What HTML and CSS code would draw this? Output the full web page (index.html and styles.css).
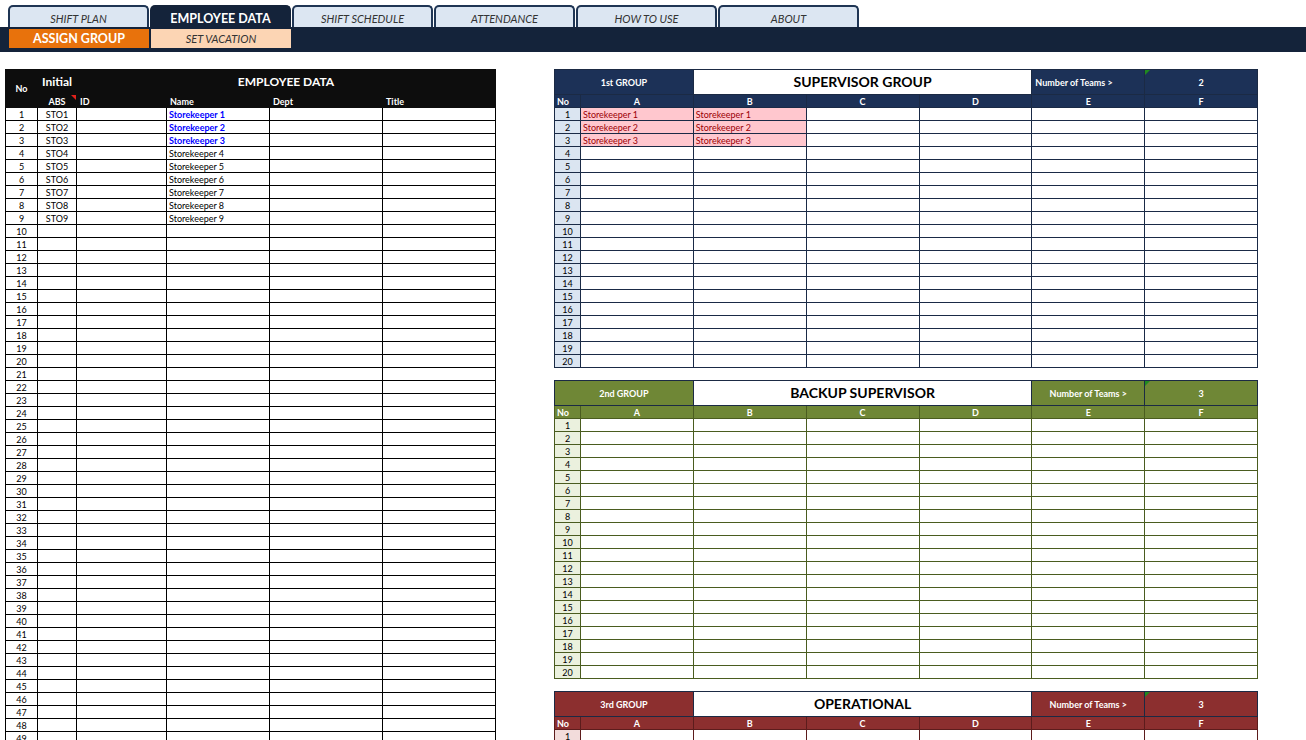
FILE: index.html
```html
<!DOCTYPE html>
<html>
<head>
<meta charset="utf-8">
<title>Employee Data</title>
<link rel="stylesheet" href="styles.css">
</head>
<body>
<header class="topbar">
  <nav class="tabs">
    <div class="tab">SHIFT PLAN</div>
    <div class="tab active">EMPLOYEE DATA</div>
    <div class="tab">SHIFT SCHEDULE</div>
    <div class="tab">ATTENDANCE</div>
    <div class="tab">HOW TO USE</div>
    <div class="tab">ABOUT</div>
  </nav>
  <div class="subbar">
    <div class="subtab assign">ASSIGN GROUP</div>
    <div class="subtab vacation">SET VACATION</div>
  </div>
</header>
<main class="sheet">
  <table class="emp">
    <colgroup><col class="c-no"><col class="c-abs"><col class="c-id"><col class="c-name"><col class="c-dept"><col class="c-title"></colgroup>
    <thead>
      <tr class="h1"><th rowspan="2" class="no">No</th><th class="initial">Initial</th><th colspan="4" class="big">EMPLOYEE DATA</th></tr>
      <tr class="h2"><th class="abs">ABS</th><th>ID</th><th>Name</th><th>Dept</th><th>Title</th></tr>
    </thead>
    <tbody>
      <tr><td>1</td><td>STO1</td><td></td><td class="nm blue">Storekeeper 1</td><td></td><td></td></tr>
      <tr><td>2</td><td>STO2</td><td></td><td class="nm blue">Storekeeper 2</td><td></td><td></td></tr>
      <tr><td>3</td><td>STO3</td><td></td><td class="nm blue">Storekeeper 3</td><td></td><td></td></tr>
      <tr><td>4</td><td>STO4</td><td></td><td class="nm">Storekeeper 4</td><td></td><td></td></tr>
      <tr><td>5</td><td>STO5</td><td></td><td class="nm">Storekeeper 5</td><td></td><td></td></tr>
      <tr><td>6</td><td>STO6</td><td></td><td class="nm">Storekeeper 6</td><td></td><td></td></tr>
      <tr><td>7</td><td>STO7</td><td></td><td class="nm">Storekeeper 7</td><td></td><td></td></tr>
      <tr><td>8</td><td>STO8</td><td></td><td class="nm">Storekeeper 8</td><td></td><td></td></tr>
      <tr><td>9</td><td>STO9</td><td></td><td class="nm">Storekeeper 9</td><td></td><td></td></tr>
      <tr><td>10</td><td></td><td></td><td></td><td></td><td></td></tr>
      <tr><td>11</td><td></td><td></td><td></td><td></td><td></td></tr>
      <tr><td>12</td><td></td><td></td><td></td><td></td><td></td></tr>
      <tr><td>13</td><td></td><td></td><td></td><td></td><td></td></tr>
      <tr><td>14</td><td></td><td></td><td></td><td></td><td></td></tr>
      <tr><td>15</td><td></td><td></td><td></td><td></td><td></td></tr>
      <tr><td>16</td><td></td><td></td><td></td><td></td><td></td></tr>
      <tr><td>17</td><td></td><td></td><td></td><td></td><td></td></tr>
      <tr><td>18</td><td></td><td></td><td></td><td></td><td></td></tr>
      <tr><td>19</td><td></td><td></td><td></td><td></td><td></td></tr>
      <tr><td>20</td><td></td><td></td><td></td><td></td><td></td></tr>
      <tr><td>21</td><td></td><td></td><td></td><td></td><td></td></tr>
      <tr><td>22</td><td></td><td></td><td></td><td></td><td></td></tr>
      <tr><td>23</td><td></td><td></td><td></td><td></td><td></td></tr>
      <tr><td>24</td><td></td><td></td><td></td><td></td><td></td></tr>
      <tr><td>25</td><td></td><td></td><td></td><td></td><td></td></tr>
      <tr><td>26</td><td></td><td></td><td></td><td></td><td></td></tr>
      <tr><td>27</td><td></td><td></td><td></td><td></td><td></td></tr>
      <tr><td>28</td><td></td><td></td><td></td><td></td><td></td></tr>
      <tr><td>29</td><td></td><td></td><td></td><td></td><td></td></tr>
      <tr><td>30</td><td></td><td></td><td></td><td></td><td></td></tr>
      <tr><td>31</td><td></td><td></td><td></td><td></td><td></td></tr>
      <tr><td>32</td><td></td><td></td><td></td><td></td><td></td></tr>
      <tr><td>33</td><td></td><td></td><td></td><td></td><td></td></tr>
      <tr><td>34</td><td></td><td></td><td></td><td></td><td></td></tr>
      <tr><td>35</td><td></td><td></td><td></td><td></td><td></td></tr>
      <tr><td>36</td><td></td><td></td><td></td><td></td><td></td></tr>
      <tr><td>37</td><td></td><td></td><td></td><td></td><td></td></tr>
      <tr><td>38</td><td></td><td></td><td></td><td></td><td></td></tr>
      <tr><td>39</td><td></td><td></td><td></td><td></td><td></td></tr>
      <tr><td>40</td><td></td><td></td><td></td><td></td><td></td></tr>
      <tr><td>41</td><td></td><td></td><td></td><td></td><td></td></tr>
      <tr><td>42</td><td></td><td></td><td></td><td></td><td></td></tr>
      <tr><td>43</td><td></td><td></td><td></td><td></td><td></td></tr>
      <tr><td>44</td><td></td><td></td><td></td><td></td><td></td></tr>
      <tr><td>45</td><td></td><td></td><td></td><td></td><td></td></tr>
      <tr><td>46</td><td></td><td></td><td></td><td></td><td></td></tr>
      <tr><td>47</td><td></td><td></td><td></td><td></td><td></td></tr>
      <tr><td>48</td><td></td><td></td><td></td><td></td><td></td></tr>
      <tr><td>49</td><td></td><td></td><td></td><td></td><td></td></tr>
    </tbody>
  </table>

  <div class="groups">
    <table class="grp g1">
      <colgroup><col class="c-gno"><col><col><col><col><col><col></colgroup>
      <thead>
        <tr class="title"><th colspan="2">1st GROUP</th><th colspan="3" class="name">SUPERVISOR GROUP</th><th class="teams left">Number of Teams &gt;</th><th class="count">2</th></tr>
        <tr class="cols"><th class="lno">No</th><th>A</th><th>B</th><th>C</th><th>D</th><th>E</th><th>F</th></tr>
      </thead>
      <tbody>
        <tr><td>1</td><td class="pk">Storekeeper 1</td><td class="pk">Storekeeper 1</td><td></td><td></td><td></td><td></td></tr>
        <tr><td>2</td><td class="pk">Storekeeper 2</td><td class="pk">Storekeeper 2</td><td></td><td></td><td></td><td></td></tr>
        <tr><td>3</td><td class="pk">Storekeeper 3</td><td class="pk">Storekeeper 3</td><td></td><td></td><td></td><td></td></tr>
        <tr><td>4</td><td></td><td></td><td></td><td></td><td></td><td></td></tr>
        <tr><td>5</td><td></td><td></td><td></td><td></td><td></td><td></td></tr>
        <tr><td>6</td><td></td><td></td><td></td><td></td><td></td><td></td></tr>
        <tr><td>7</td><td></td><td></td><td></td><td></td><td></td><td></td></tr>
        <tr><td>8</td><td></td><td></td><td></td><td></td><td></td><td></td></tr>
        <tr><td>9</td><td></td><td></td><td></td><td></td><td></td><td></td></tr>
        <tr><td>10</td><td></td><td></td><td></td><td></td><td></td><td></td></tr>
        <tr><td>11</td><td></td><td></td><td></td><td></td><td></td><td></td></tr>
        <tr><td>12</td><td></td><td></td><td></td><td></td><td></td><td></td></tr>
        <tr><td>13</td><td></td><td></td><td></td><td></td><td></td><td></td></tr>
        <tr><td>14</td><td></td><td></td><td></td><td></td><td></td><td></td></tr>
        <tr><td>15</td><td></td><td></td><td></td><td></td><td></td><td></td></tr>
        <tr><td>16</td><td></td><td></td><td></td><td></td><td></td><td></td></tr>
        <tr><td>17</td><td></td><td></td><td></td><td></td><td></td><td></td></tr>
        <tr><td>18</td><td></td><td></td><td></td><td></td><td></td><td></td></tr>
        <tr><td>19</td><td></td><td></td><td></td><td></td><td></td><td></td></tr>
        <tr><td>20</td><td></td><td></td><td></td><td></td><td></td><td></td></tr>
      </tbody>
    </table>

    <table class="grp g2">
      <colgroup><col class="c-gno"><col><col><col><col><col><col></colgroup>
      <thead>
        <tr class="title"><th colspan="2">2nd GROUP</th><th colspan="3" class="name">BACKUP SUPERVISOR</th><th class="teams">Number of Teams &gt;</th><th class="count">3</th></tr>
        <tr class="cols"><th class="lno">No</th><th>A</th><th>B</th><th>C</th><th>D</th><th>E</th><th>F</th></tr>
      </thead>
      <tbody>
        <tr><td>1</td><td></td><td></td><td></td><td></td><td></td><td></td></tr>
        <tr><td>2</td><td></td><td></td><td></td><td></td><td></td><td></td></tr>
        <tr><td>3</td><td></td><td></td><td></td><td></td><td></td><td></td></tr>
        <tr><td>4</td><td></td><td></td><td></td><td></td><td></td><td></td></tr>
        <tr><td>5</td><td></td><td></td><td></td><td></td><td></td><td></td></tr>
        <tr><td>6</td><td></td><td></td><td></td><td></td><td></td><td></td></tr>
        <tr><td>7</td><td></td><td></td><td></td><td></td><td></td><td></td></tr>
        <tr><td>8</td><td></td><td></td><td></td><td></td><td></td><td></td></tr>
        <tr><td>9</td><td></td><td></td><td></td><td></td><td></td><td></td></tr>
        <tr><td>10</td><td></td><td></td><td></td><td></td><td></td><td></td></tr>
        <tr><td>11</td><td></td><td></td><td></td><td></td><td></td><td></td></tr>
        <tr><td>12</td><td></td><td></td><td></td><td></td><td></td><td></td></tr>
        <tr><td>13</td><td></td><td></td><td></td><td></td><td></td><td></td></tr>
        <tr><td>14</td><td></td><td></td><td></td><td></td><td></td><td></td></tr>
        <tr><td>15</td><td></td><td></td><td></td><td></td><td></td><td></td></tr>
        <tr><td>16</td><td></td><td></td><td></td><td></td><td></td><td></td></tr>
        <tr><td>17</td><td></td><td></td><td></td><td></td><td></td><td></td></tr>
        <tr><td>18</td><td></td><td></td><td></td><td></td><td></td><td></td></tr>
        <tr><td>19</td><td></td><td></td><td></td><td></td><td></td><td></td></tr>
        <tr><td>20</td><td></td><td></td><td></td><td></td><td></td><td></td></tr>
      </tbody>
    </table>

    <table class="grp g3">
      <colgroup><col class="c-gno"><col><col><col><col><col><col></colgroup>
      <thead>
        <tr class="title"><th colspan="2">3rd GROUP</th><th colspan="3" class="name">OPERATIONAL</th><th class="teams">Number of Teams &gt;</th><th class="count">3</th></tr>
        <tr class="cols"><th class="lno">No</th><th>A</th><th>B</th><th>C</th><th>D</th><th>E</th><th>F</th></tr>
      </thead>
      <tbody>
        <tr><td>1</td><td></td><td></td><td></td><td></td><td></td><td></td></tr>
      </tbody>
    </table>
  </div>
</main>
</body>
</html>
```

FILE: styles.css
```css
* { box-sizing: border-box; }

html, body {
  margin: 0;
  height: 740px;
  overflow: hidden;
  background: #ffffff;
  font-family: Lato, "Open Sans", sans-serif;
  color: #000;
}

/* ---------- top navigation ---------- */
.tabs {
  display: flex;
  gap: 1px;
  padding: 5px 0 0 8px;
}

.tab {
  width: 141px;
  height: 22px;
  background: #dce6f2;
  border: 2px solid #1f3554;
  border-bottom: none;
  border-radius: 5px 5px 0 0;
  color: #333333;
  font-size: 11px;
  font-style: italic;
  display: flex;
  align-items: center;
  justify-content: center;
  padding-top: 2px;
}

.tab.active {
  background: #14233a;
  border-color: #14233a;
  color: #ffffff;
  font-style: normal;
  font-weight: 700;
  font-size: 12.5px;
}

.subbar {
  background: #14233a;
  height: 25px;
  display: flex;
  gap: 2px;
  padding: 2px 0 0 9px;
}

.subtab {
  width: 140px;
  height: 19px;
  display: flex;
  align-items: center;
  justify-content: center;
  font-size: 11px;
}

.subtab.assign {
  background: #e8720c;
  color: #fff;
  font-weight: 700;
  font-size: 12.5px;
}

.subtab.vacation {
  background: #fcd5b4;
  color: #333333;
  font-style: italic;
}

/* ---------- sheet ---------- */
.sheet {
  display: flex;
  align-items: flex-start;
  gap: 58px;
  padding: 17px 0 0 5px;
}

table {
  border-collapse: collapse;
  table-layout: fixed;
}

th, td {
  padding: 0;
  font-size: 9px;
  line-height: 11px;
  white-space: nowrap;
  overflow: hidden;
}

/* employee table */
.emp { width: 490px; }
.emp .c-no { width: 32px; }
.emp .c-abs { width: 39px; }
.emp .c-id { width: 90px; }
.emp .c-name { width: 103px; }
.emp .c-dept { width: 113px; }
.emp .c-title { width: 113px; }

.emp th {
  background: #0d0d0d;
  color: #fff;
  border: 1px solid #0d0d0d;
  font-weight: 700;
}

.emp .h1 { height: 25px; }
.emp .h1 th { font-size: 12px; }
.emp .h1 th.no { font-size: 9px; text-align: center; }
.emp .h1 th.initial { text-align: left; padding: 0 0 2px 4px; }
.emp .h1 th.big { text-align: center; padding: 0 0 2px 0; }

.emp .h2 { height: 13px; }
.emp .h2 th { text-align: left; padding-left: 3px; border-top-color: #262626; }
.emp .h2 th.abs { text-align: center; padding-left: 0; position: relative; }
.emp .h2 th.abs::after {
  content: "";
  position: absolute;
  top: 0;
  right: 0;
  border-top: 5px solid #e0211b;
  border-left: 5px solid transparent;
}

.emp tbody tr { height: 13px; }
.emp td { border: 1px solid #000; }
.emp td:nth-child(1),
.emp td:nth-child(2) { text-align: center; }
.emp td.nm { padding-left: 2px; }
.emp td.blue { color: #0000ff; font-weight: 700; }

/* group tables */
.groups {
  display: flex;
  flex-direction: column;
  gap: 12px;
}

.grp { width: 704px; }
.grp .c-gno { width: 26px; }

.g1 { --main: #1c3157; --light: #dbe5f1; --line: #1a2a46; }
.g2 { --main: #6f8736; --light: #ebf1de; --line: #4a5c1f; }
.g3 { --main: #8c2f2f; --light: #f2dcdb; --line: #5c1c1c; }

.grp .title { height: 25px; }
.grp .title th {
  background: var(--main);
  color: #fff;
  border: 1px solid #1b2a44;
  font-size: 9px;
  font-weight: 700;
  text-align: center;
}
.grp .title th.name {
  background: #fff;
  color: #000;
  font-size: 14px;
  line-height: 18px;
}
.grp .title th.teams.left { text-align: left; padding-left: 3px; }
.grp .title th.count { position: relative; }
.grp .title th.count::before {
  content: "";
  position: absolute;
  top: 0;
  left: 0;
  border-top: 5px solid #1f8a1f;
  border-right: 5px solid transparent;
}

.grp .cols { height: 13px; }
.grp .cols th {
  background: var(--main);
  color: #fff;
  border: 1px solid var(--line);
  font-weight: 700;
  text-align: center;
}
.grp .cols th.lno { text-align: left; padding-left: 2px; }

.grp tbody tr { height: 13px; }
.grp td { border: 1px solid var(--line); }
.grp td:first-child {
  background: var(--light);
  text-align: center;
}
.grp td.pk {
  background: #ffc7ce;
  color: #9c0006;
  padding-left: 2px;
}
```
